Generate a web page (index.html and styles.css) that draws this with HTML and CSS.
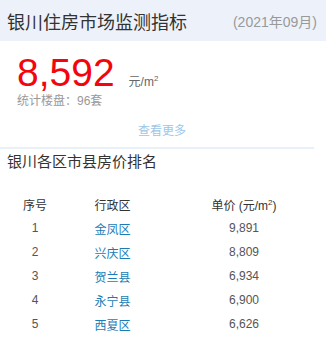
FILE: index.html
```html
<!DOCTYPE html>
<html lang="zh">
<head>
<meta charset="utf-8">
<link rel="stylesheet" href="styles.css">
</head>
<body>
<div class="header">
  <span class="title">银川住房市场监测指标</span>
  <span class="date">(2021年09月)</span>
</div>
<div class="summary">
  <div class="price-line">
    <span class="price">8,592</span>
    <span class="unit">元/m<sup>2</sup></span>
  </div>
  <div class="count">统计楼盘：96套</div>
</div>
<div class="more">查看更多</div>
<div class="divider"></div>
<div class="section-title">银川各区市县房价排名</div>
<div class="table">
  <div class="row head"><span>序号</span><span>行政区</span><span class="c3">单价 (元/m<sup>2</sup>)</span></div>
  <div class="row"><span class="num">1</span><span class="link">金凤区</span><span class="num c3">9,891</span></div>
  <div class="row"><span class="num">2</span><span class="link">兴庆区</span><span class="num c3">8,809</span></div>
  <div class="row"><span class="num">3</span><span class="link">贺兰县</span><span class="num c3">6,934</span></div>
  <div class="row"><span class="num">4</span><span class="link">永宁县</span><span class="num c3">6,900</span></div>
  <div class="row"><span class="num">5</span><span class="link">西夏区</span><span class="num c3">6,626</span></div>
</div>
</body>
</html>
```
FILE: styles.css
```css
* { box-sizing: border-box; }
body {
  margin: 0;
  background: #fff;
  font-family: "Liberation Sans", "Noto Sans CJK SC", sans-serif;
  color: #333;
}
.header {
  height: 41px;
  background: #edf2fa;
  display: flex;
  align-items: center;
  justify-content: space-between;
  padding: 0 9px 0 7px;
}
.title {
  font-size: 18px;
  color: #333;
}
.date {
  font-size: 14px;
  color: #999;
}
.summary {
  padding: 12px 0 0 17px;
}
.price-line {
  display: flex;
  align-items: baseline;
  height: 40px;
}
.price {
  font-size: 39px;
  line-height: 40px;
  color: #f2050c;
}
.unit {
  font-size: 12px;
  color: #666;
  margin-left: 14px;
}
sup {
  font-size: 8px;
  vertical-align: 5px;
  line-height: 0;
}
.count {
  font-size: 12px;
  line-height: 16px;
  color: #999;
}
.more {
  margin-top: 14px;
  text-align: center;
  font-size: 12px;
  line-height: 16px;
  color: #9cc6e8;
  padding-right: 2px;
}
.divider {
  margin-top: 8px;
  width: 314px;
  height: 2px;
  background: #e8f0fa;
}
.section-title {
  margin-top: 3px;
  padding-left: 7px;
  font-size: 15px;
  line-height: 20px;
  color: #333;
}
.table {
  margin-top: 20px;
}
.row {
  display: grid;
  grid-template-columns: 70px 85px 1fr;
  height: 24px;
  align-items: center;
  font-size: 12px;
  text-align: center;
}
.row .c3 {
  padding-left: 7px;
}
.head span { color: #333; }
.num { color: #555; }
.link { color: #1b7cb5; }
```
